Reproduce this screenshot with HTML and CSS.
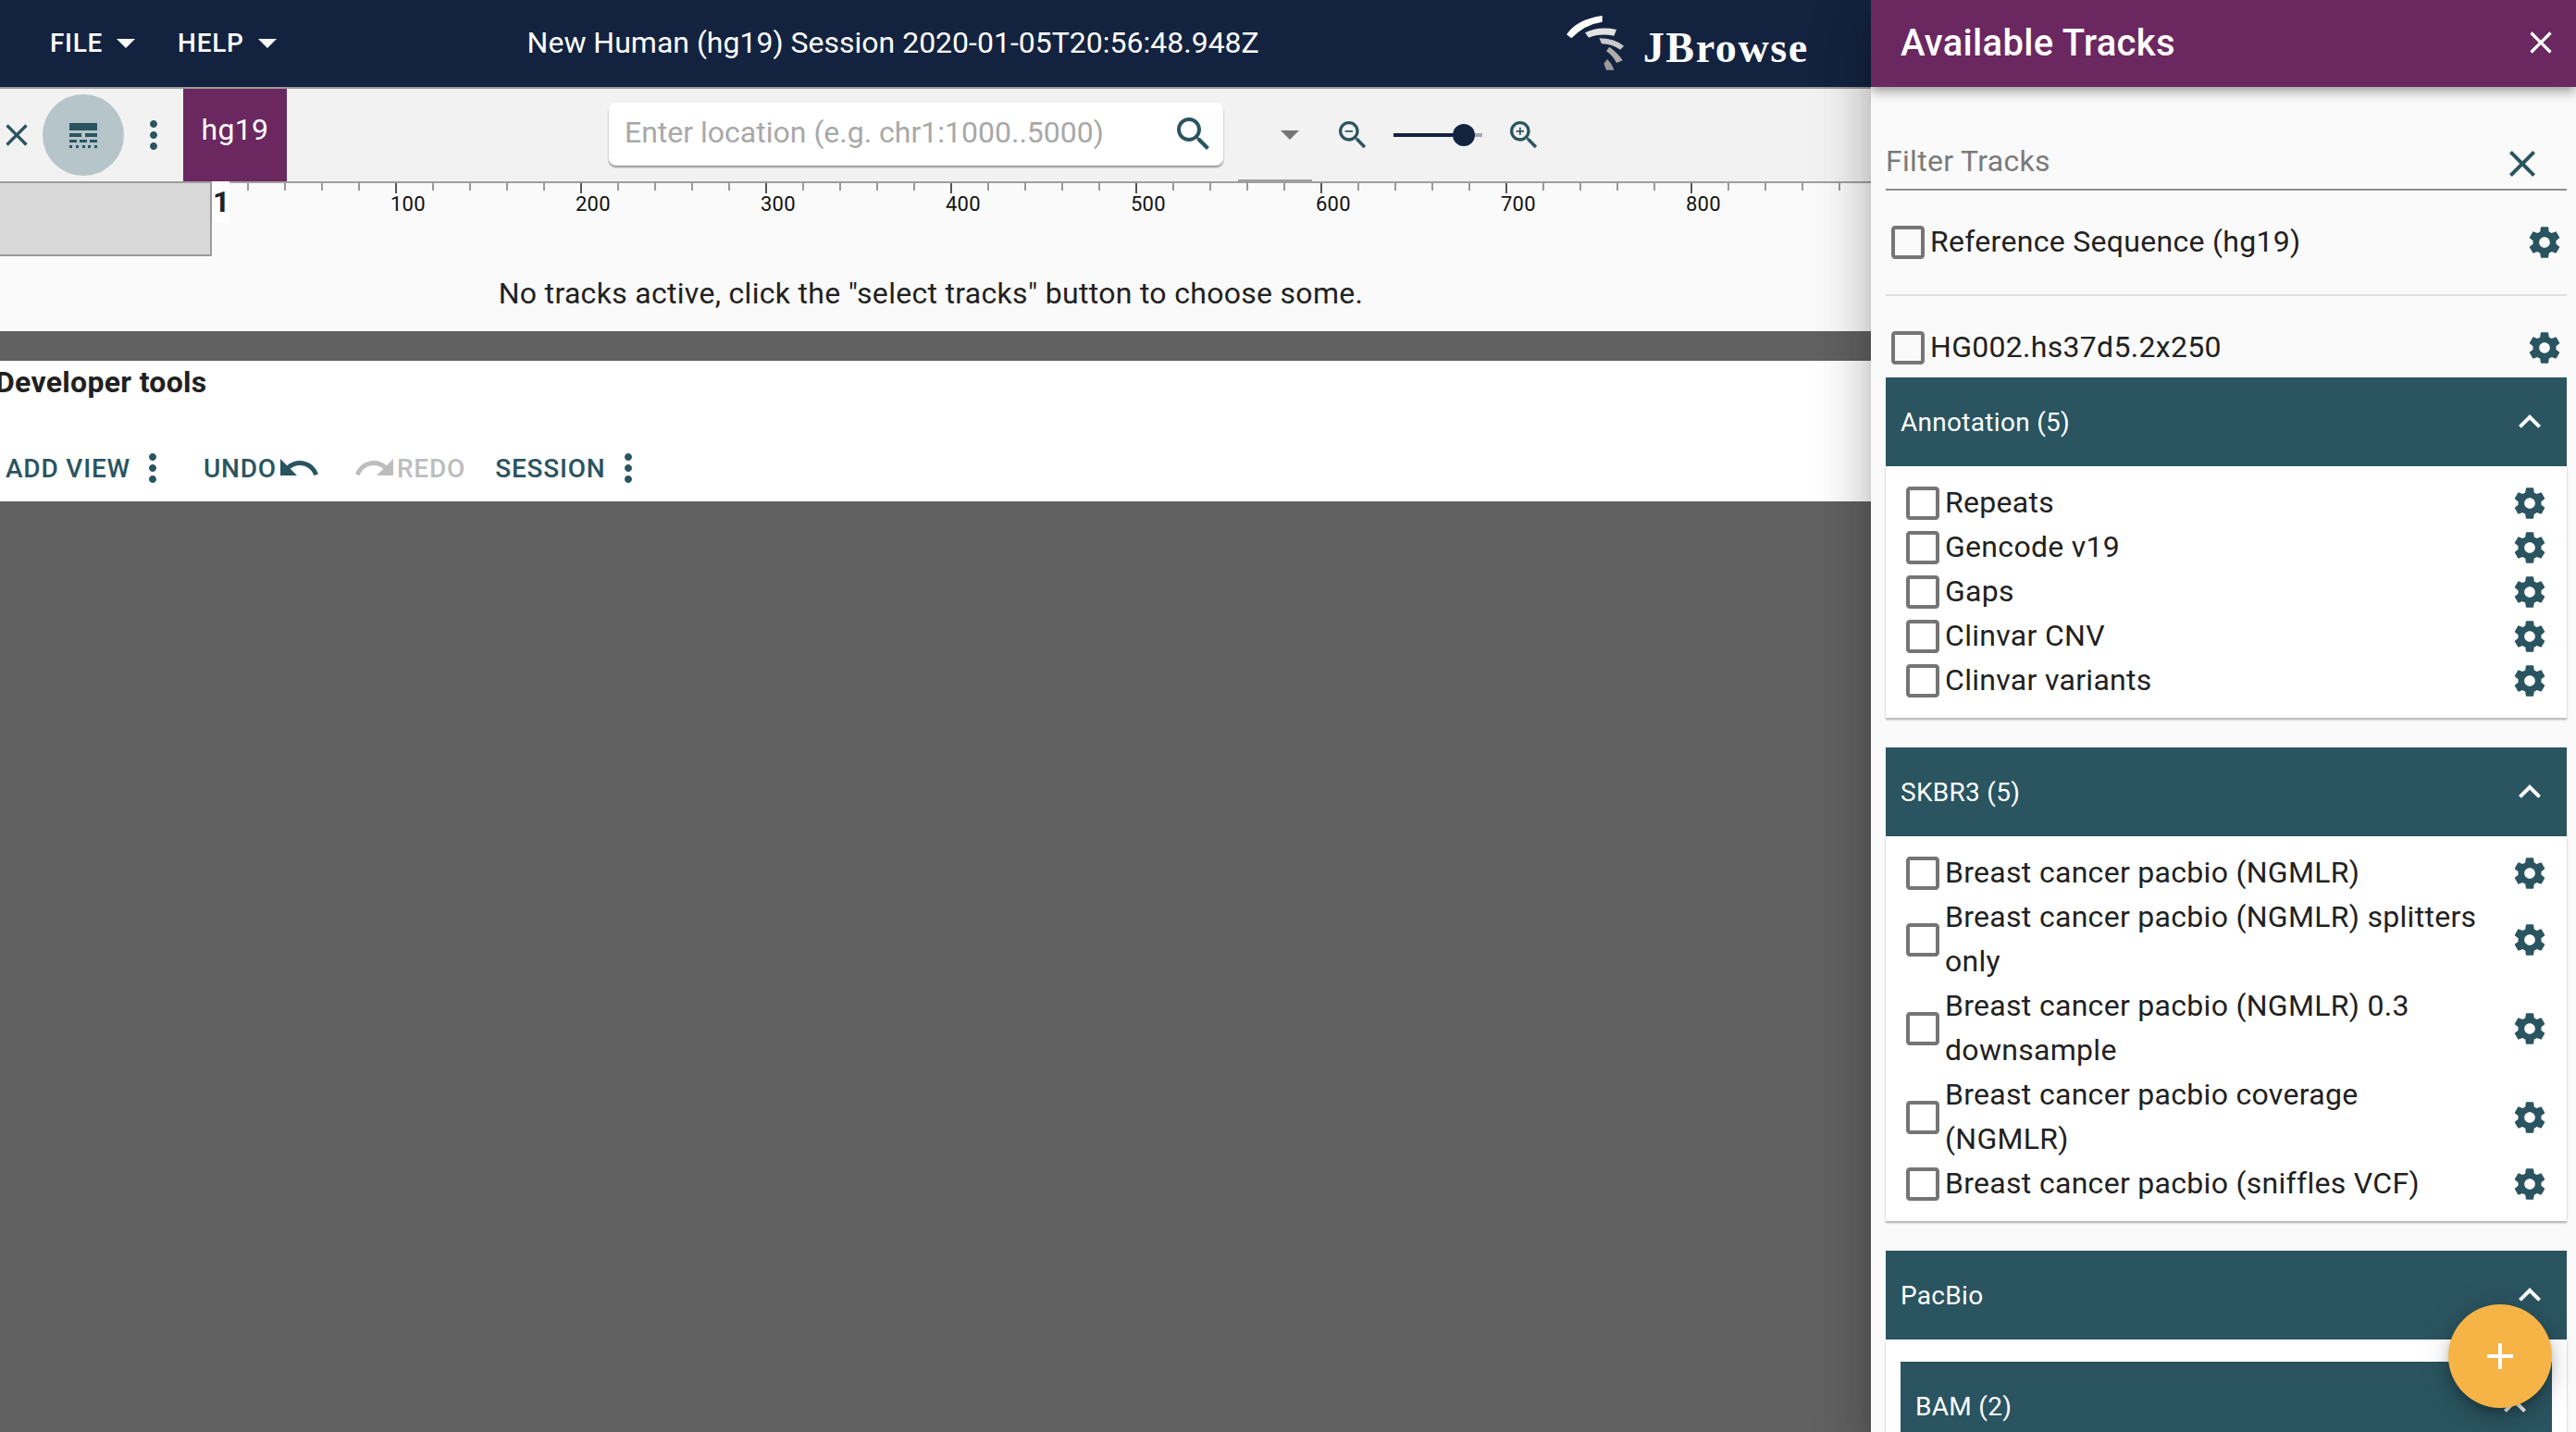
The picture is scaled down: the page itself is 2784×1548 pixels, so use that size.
FILE: index.html
```html
<!DOCTYPE html>
<html>
<head>
    <title>JBrowse</title>
    <meta http-equiv="Content-Type" content="text/html; charset=utf-8" />
    <link rel="stylesheet" href="styles.css">
</head>

<body>
    <svg class="defs" width="0" height="0">
        <defs>
            <symbol id="i-close" viewBox="0 0 24 24"><path d="M19 6.41L17.59 5 12 10.59 6.41 5 5 6.41 10.59 12 5 17.59 6.41 19 12 13.41 17.59 19 19 17.59 13.41 12z"/></symbol>
            <symbol id="i-more" viewBox="0 0 24 24"><path d="M12 8c1.1 0 2-.9 2-2s-.9-2-2-2-2 .9-2 2 .9 2 2 2zm0 2c-1.1 0-2 .9-2 2s.9 2 2 2 2-.9 2-2-.9-2-2-2zm0 6c-1.1 0-2 .9-2 2s.9 2 2 2 2-.9 2-2-.9-2-2-2z"/></symbol>
            <symbol id="i-drop" viewBox="0 0 24 24"><path d="M7 10l5 5 5-5z"/></symbol>
            <symbol id="i-search" viewBox="0 0 24 24"><path d="M15.5 14h-.79l-.28-.27C15.41 12.59 16 11.11 16 9.5 16 5.91 13.09 3 9.5 3S3 5.91 3 9.5 5.91 16 9.5 16c1.61 0 3.09-.59 4.23-1.57l.27.28v.79l5 4.99L20.49 19l-4.99-5zm-6 0C7.01 14 5 11.99 5 9.5S7.01 5 9.5 5 14 7.01 14 9.5 11.99 14 9.5 14z"/></symbol>
            <symbol id="i-gear" viewBox="0 0 24 24"><path d="M19.43 12.98c.04-.32.07-.64.07-.98s-.03-.66-.07-.98l2.11-1.65c.19-.15.24-.42.12-.64l-2-3.46c-.12-.22-.39-.3-.61-.22l-2.49 1c-.52-.4-1.08-.73-1.69-.98l-.38-2.65C14.46 2.18 14.25 2 14 2h-4c-.25 0-.46.18-.49.42l-.38 2.65c-.61.25-1.17.59-1.69.98l-2.49-1c-.23-.09-.49 0-.61.22l-2 3.46c-.13.22-.07.49.12.64l2.11 1.65c-.04.32-.07.65-.07.98s.03.66.07.98l-2.11 1.65c-.19.15-.24.42-.12.64l2 3.46c.12.22.39.3.61.22l2.49-1c.52.4 1.08.73 1.69.98l.38 2.65c.03.24.24.42.49.42h4c.25 0 .46-.18.49-.42l.38-2.65c.61-.25 1.17-.59 1.69-.98l2.49 1c.23.09.49 0 .61-.22l2-3.46c.12-.22.07-.49-.12-.64l-2.11-1.65zM12 15.5c-1.93 0-3.5-1.57-3.5-3.5s1.57-3.5 3.5-3.5 3.5 1.57 3.5 3.5-1.57 3.5-3.5 3.5z"/></symbol>
            <symbol id="i-box" viewBox="0 0 24 24"><path d="M19 5v14H5V5h14m0-2H5c-1.1 0-2 .9-2 2v14c0 1.1.9 2 2 2h14c1.1 0 2-.9 2-2V5c0-1.1-.9-2-2-2z"/></symbol>
            <symbol id="i-less" viewBox="0 0 24 24"><path d="M12 8l-6 6 1.41 1.41L12 10.83l4.59 4.58L18 14z"/></symbol>
        </defs>
    </svg>

    <div class="app">
        <div class="main">
            <header class="topbar">
                <div class="menu-btn">FILE<svg class="ic48"><use href="#i-drop"/></svg></div>
                <div class="menu-btn">HELP<svg class="ic48"><use href="#i-drop"/></svg></div>
                <div class="session-name">New Human (hg19) Session 2020-01-05T20:56:48.948Z</div>
                <div class="logo">
                    <svg class="logo-mark" viewBox="0 0 240 240">
                        <path fill="#ffffff" d="M36 88Q70 38 152 27L152 47Q95 55 52 100Z"/>
                        <path fill="#e2e2e2" d="M96 82Q140 60 198 72L190 92Q145 82 108 98Z"/>
                        <path fill="#c8c8c8" d="M142 100Q190 100 222 125L210 137Q180 118 150 118Z"/>
                        <path fill="#adadad" d="M175 128Q205 150 218 172L198 180Q185 155 165 142Z"/>
                        <path fill="#9a9a9a" d="M168 168Q185 185 190 203L165 203Q160 190 157 182Z"/>
                    </svg>
                    <span class="logo-text">JBrowse</span>
                </div>
            </header>

            <div class="view-bar">
                <svg class="ic40 teal close-view"><use href="#i-close"/></svg>
                <div class="tracks-btn">
                    <svg width="30" height="27" viewBox="0 0 30 27" class="teal">
                        <rect x="0" y="0" width="30" height="8"/>
                        <rect x="0" y="11" width="13" height="4"/><rect x="17" y="11" width="13" height="4"/>
                        <rect x="0" y="18" width="8" height="3"/><rect x="11" y="18" width="8" height="3"/><rect x="22" y="18" width="8" height="3"/>
                        <rect x="0" y="24" width="3" height="3"/><rect x="7" y="24" width="3" height="3"/><rect x="14" y="24" width="3" height="3"/><rect x="20" y="24" width="3" height="3"/><rect x="27" y="24" width="3" height="3"/>
                    </svg>
                </div>
                <svg class="ic48 teal"><use href="#i-more"/></svg>
                <div class="asm-tab">hg19</div>
                <div class="search-box">
                    <span class="search-hint">Enter location (e.g. chr1:1000..5000)</span>
                    <svg class="ic48 teal"><use href="#i-search"/></svg>
                </div>
                <div class="asm-select"><svg class="ic48 grey"><use href="#i-drop"/></svg></div>
                <svg class="ic40 teal zoom-out" viewBox="0 0 24 24"><path d="M15.5 14h-.79l-.28-.27C15.41 12.59 16 11.11 16 9.5 16 5.91 13.09 3 9.5 3S3 5.91 3 9.5 5.91 16 9.5 16c1.61 0 3.09-.59 4.23-1.57l.27.28v.79l5 4.99L20.49 19l-4.99-5zm-6 0C7.01 14 5 11.99 5 9.5S7.01 5 9.5 5 14 7.01 14 9.5 11.99 14 9.5 14zM7 9h5v1H7z"/></svg>
                <div class="slider"><div class="slider-fill"></div><div class="slider-thumb"></div><div class="slider-rest"></div></div>
                <svg class="ic40 teal zoom-in" viewBox="0 0 24 24"><path d="M15.5 14h-.79l-.28-.27C15.41 12.59 16 11.11 16 9.5 16 5.91 13.09 3 9.5 3S3 5.91 3 9.5 5.91 16 9.5 16c1.61 0 3.09-.59 4.23-1.57l.27.28v.79l5 4.99L20.49 19l-4.99-5zm-6 0C7.01 14 5 11.99 5 9.5S7.01 5 9.5 5 14 7.01 14 9.5 11.99 14 9.5 14zm2.5-4h-2v2H9v-2H7V9h2V7h1v2h2v1z"/></svg>
            </div>

            <div class="ruler">
                <svg class="ruler-svg" width="2022" height="80">
                    <defs>
                        <pattern id="minor" x="27" y="0" width="40" height="8" patternUnits="userSpaceOnUse">
                            <rect x="0" y="0" width="2" height="8" fill="#999999"/>
                        </pattern>
                    </defs>
                    <rect x="228" y="0" width="1794" height="8" fill="url(#minor)"/>
                    <g fill="#555555">
                        <rect x="427" width="2" height="11"/><rect x="627" width="2" height="11"/>
                        <rect x="827" width="2" height="11"/><rect x="1027" width="2" height="11"/>
                        <rect x="1227" width="2" height="11"/><rect x="1427" width="2" height="11"/>
                        <rect x="1627" width="2" height="11"/><rect x="1827" width="2" height="11"/>
                    </g>
                    <g class="ruler-num">
                        <text x="422" y="30">100</text><text x="622" y="30">200</text>
                        <text x="822" y="30">300</text><text x="1022" y="30">400</text>
                        <text x="1222" y="30">500</text><text x="1422" y="30">600</text>
                        <text x="1622" y="30">700</text><text x="1822" y="30">800</text>
                    </g>
                </svg>
                <div class="ruler-block"></div>
                <div class="ruler-first">1</div>
            </div>
            <div class="no-tracks">No tracks active, click the "select tracks" button to choose some.</div>

            <div class="gap-dark"></div>

            <div class="dev-panel">
                <div class="dev-title">Developer tools</div>
                <div class="dev-buttons">
                    <div class="dev-btn add-view">ADD VIEW<svg class="ic48 teal"><use href="#i-more"/></svg></div>
                    <div class="dev-btn undo">UNDO<svg class="ic48 teal" viewBox="0 0 24 24"><path d="M12.5 8c-2.65 0-5.05.99-6.9 2.6L2 7v9h9l-3.62-3.62c1.39-1.16 3.16-1.88 5.12-1.88 3.54 0 6.55 2.31 7.6 5.5l2.37-.78C21.08 11.03 17.15 8 12.5 8z"/></svg></div>
                    <div class="dev-btn redo"><svg class="ic48" viewBox="0 0 24 24"><path d="M18.4 10.6C16.55 8.99 14.15 8 11.5 8c-4.65 0-8.58 3.03-9.96 7.22L3.9 16c1.05-3.19 4.05-5.5 7.6-5.5 1.95 0 3.73.72 5.12 1.88L13 16h9V7l-3.6 3.6z"/></svg>REDO</div>
                    <div class="dev-btn session">SESSION<svg class="ic48 teal"><use href="#i-more"/></svg></div>
                </div>
            </div>

            <div class="rest"></div>
        </div>

        <aside class="drawer">
            <div class="drawer-head">
                <span>Available Tracks</span>
                <svg class="ic40 white"><use href="#i-close"/></svg>
            </div>
            <div class="drawer-body">
                <div class="filter">
                    <span>Filter Tracks</span>
                    <svg class="ic48 teal"><use href="#i-close"/></svg>
                </div>

                <div class="track top-track first">
                    <svg class="ic48 box"><use href="#i-box"/></svg>
                    <span class="track-name">Reference Sequence (hg19)</span>
                    <svg class="ic40 teal"><use href="#i-gear"/></svg>
                </div>
                <div class="divider"></div>
                <div class="track top-track">
                    <svg class="ic48 box"><use href="#i-box"/></svg>
                    <span class="track-name">HG002.hs37d5.2x250</span>
                    <svg class="ic40 teal"><use href="#i-gear"/></svg>
                </div>

                <section class="group">
                    <div class="group-head"><span>Annotation (5)</span><svg class="ic48 white"><use href="#i-less"/></svg></div>
                    <div class="group-body">
                        <div class="track"><svg class="ic48 box"><use href="#i-box"/></svg><span class="track-name">Repeats</span><svg class="ic40 teal"><use href="#i-gear"/></svg></div>
                        <div class="track"><svg class="ic48 box"><use href="#i-box"/></svg><span class="track-name">Gencode v19</span><svg class="ic40 teal"><use href="#i-gear"/></svg></div>
                        <div class="track"><svg class="ic48 box"><use href="#i-box"/></svg><span class="track-name">Gaps</span><svg class="ic40 teal"><use href="#i-gear"/></svg></div>
                        <div class="track"><svg class="ic48 box"><use href="#i-box"/></svg><span class="track-name">Clinvar CNV</span><svg class="ic40 teal"><use href="#i-gear"/></svg></div>
                        <div class="track"><svg class="ic48 box"><use href="#i-box"/></svg><span class="track-name">Clinvar variants</span><svg class="ic40 teal"><use href="#i-gear"/></svg></div>
                    </div>
                </section>

                <section class="group">
                    <div class="group-head"><span>SKBR3 (5)</span><svg class="ic48 white"><use href="#i-less"/></svg></div>
                    <div class="group-body">
                        <div class="track"><svg class="ic48 box"><use href="#i-box"/></svg><span class="track-name">Breast cancer pacbio (NGMLR)</span><svg class="ic40 teal"><use href="#i-gear"/></svg></div>
                        <div class="track"><svg class="ic48 box"><use href="#i-box"/></svg><span class="track-name">Breast cancer pacbio (NGMLR) splitters only</span><svg class="ic40 teal"><use href="#i-gear"/></svg></div>
                        <div class="track"><svg class="ic48 box"><use href="#i-box"/></svg><span class="track-name">Breast cancer pacbio (NGMLR) 0.3 downsample</span><svg class="ic40 teal"><use href="#i-gear"/></svg></div>
                        <div class="track"><svg class="ic48 box"><use href="#i-box"/></svg><span class="track-name">Breast cancer pacbio coverage (NGMLR)</span><svg class="ic40 teal"><use href="#i-gear"/></svg></div>
                        <div class="track"><svg class="ic48 box"><use href="#i-box"/></svg><span class="track-name">Breast cancer pacbio (sniffles VCF)</span><svg class="ic40 teal"><use href="#i-gear"/></svg></div>
                    </div>
                </section>

                <section class="group">
                    <div class="group-head"><span>PacBio</span><svg class="ic48 white"><use href="#i-less"/></svg></div>
                    <div class="group-body nested">
                        <div class="group-head"><span>BAM (2)</span><svg class="ic48 white"><use href="#i-less"/></svg></div>
                    </div>
                </section>
            </div>

            <div class="fab">
                <svg width="28" height="28" viewBox="0 0 28 28"><rect x="12" y="0" width="4" height="28" fill="#fff"/><rect x="0" y="12" width="28" height="4" fill="#fff"/></svg>
            </div>
        </aside>
    </div>
</body>

</html>
```

FILE: styles.css
```css
html, body {
    margin: 0;
    height: 100%;
    overflow: hidden;
}

body {
    font-family: Roboto, "Liberation Sans", sans-serif;
    font-size: 32px;
    letter-spacing: 0.3px;
    color: #212121;
}

svg {
    fill: currentColor;
    flex: none;
    display: block;
}

.defs {
    position: absolute;
}

.ic48 { width: 48px; height: 48px; }
.ic40 { width: 40px; height: 40px; }
.teal { color: #2a5460; fill: #2a5460; }
.white { color: #ffffff; }
.grey { color: #757575; }
.box { color: #757575; }

.app {
    display: flex;
    width: 2784px;
    height: 1548px;
    overflow: hidden;
}

.main {
    width: 2022px;
    display: flex;
    flex-direction: column;
    background-color: #616161;
}

/* top bar */
.topbar {
    height: 92px;
    padding: 0 0 2px 38px;
    border-bottom: 2px solid #9a9a9a;
    background-color: #13233f;
    color: #ffffff;
    display: flex;
    align-items: center;
}

.menu-btn {
    display: flex;
    align-items: center;
    padding: 0 16px;
    font-size: 28px;
    font-weight: 500;
    letter-spacing: 0.7px;
}

.menu-btn svg {
    margin-left: 1px;
}

.session-name {
    margin-left: 241px;
    white-space: nowrap;
    letter-spacing: 0;
}

.logo {
    display: flex;
    align-items: center;
    margin-left: 320px;
    padding-top: 2px;
}

.logo-mark {
    width: 80px;
    height: 80px;
    margin-top: 2px;
}

.logo-text {
    font-family: "Liberation Serif", serif;
    font-size: 46px;
    font-weight: 700;
    letter-spacing: 1.6px;
    margin-left: 15px;
    margin-top: 8px;
}

/* view toolbar */
.view-bar {
    height: 100px;
    background-color: #f2f2f2;
    display: flex;
    align-items: center;
}

.close-view {
    margin-left: -2px;
}

.tracks-btn {
    width: 88px;
    height: 88px;
    margin-left: 8px;
    border-radius: 50%;
    background-color: #b5c5c9;
    display: flex;
    align-items: center;
    justify-content: center;
}

.view-bar > .ic48.teal {
    margin-left: 8px;
}

.asm-tab {
    align-self: stretch;
    width: 112px;
    margin-left: 8px;
    background-color: #6b2860;
    color: #ffffff;
    text-align: center;
    line-height: 88px;
}

.search-box {
    width: 664px;
    height: 68px;
    margin-left: 348px;
    margin-top: -2px;
    border-radius: 8px;
    background-color: #ffffff;
    box-shadow: 0 2px 2px rgba(0, 0, 0, 0.4);
    display: flex;
    align-items: center;
    justify-content: space-between;
    padding: 0 8px 0 17px;
    box-sizing: border-box;
}

.search-hint {
    color: #a8a8a8;
    margin-top: -4px;
    letter-spacing: 0;
}

.asm-select {
    align-self: stretch;
    width: 80px;
    box-sizing: border-box;
    margin-left: 16px;
    border-bottom: 2px solid #a0a0a0;
    display: flex;
    justify-content: flex-end;
    align-items: center;
}

.zoom-out {
    margin-left: 24px;
}

.slider {
    width: 96px;
    margin-left: 24px;
    display: flex;
    align-items: center;
}

.slider-fill {
    width: 64px;
    height: 4px;
    background-color: #13233f;
}

.slider-thumb {
    width: 24px;
    height: 24px;
    border-radius: 50%;
    background-color: #13233f;
}

.slider-rest {
    width: 8px;
    height: 4px;
    background-color: #a1a7b2;
}

.zoom-in {
    margin-left: 25px;
}

/* ruler and empty track area */
.ruler {
    position: relative;
    height: 80px;
    border-top: 2px solid #9e9e9e;
    background-color: #fafafa;
}

.ruler-num {
    font-size: 22px;
    letter-spacing: 0.2px;
    fill: #111111;
}

.ruler-block {
    position: absolute;
    left: 0;
    top: 0;
    width: 227px;
    height: 77px;
    background-color: #d8d8d8;
    border-right: 2px solid #9a9a9a;
    border-bottom: 2px solid #9a9a9a;
}

.ruler-first {
    position: absolute;
    left: 229px;
    top: -2px;
    width: 19px;
    height: 44px;
    padding-left: 1px;
    box-sizing: border-box;
    background-color: #ffffff;
    font-weight: 700;
    line-height: 44px;
}

.no-tracks {
    height: 80px;
    line-height: 78px;
    padding-right: 10px;
    background-color: #fafafa;
    text-align: center;
}

.gap-dark {
    height: 32px;
}

/* developer tools panel */
.dev-panel {
    height: 152px;
    background-color: #ffffff;
}

.dev-title {
    margin-left: -5px;
    font-weight: 700;
    line-height: 46px;
}

.dev-buttons {
    display: flex;
    align-items: center;
    margin-top: 46px;
    padding-left: 6px;
    font-size: 28px;
    font-weight: 500;
    letter-spacing: 0.8px;
    color: #2a5460;
}

.dev-btn {
    display: flex;
    align-items: center;
}

.undo {
    margin-left: 31px;
}

.redo {
    margin-left: 34px;
    color: #bdbdbd;
}

.session {
    margin-left: 32px;
}

.rest {
    flex: 1;
}

/* track selector drawer */
.drawer {
    position: relative;
    width: 762px;
    height: 1548px;
    overflow: hidden;
    background-color: #fafafa;
    box-shadow: 0 16px 20px -10px rgba(0, 0, 0, 0.2), 0 32px 48px 4px rgba(0, 0, 0, 0.14), 0 12px 60px 10px rgba(0, 0, 0, 0.12);
}

.drawer-head {
    position: relative;
    height: 92px;
    padding: 0 18px 2px 32px;
    background-color: #6b2860;
    color: #ffffff;
    display: flex;
    align-items: center;
    justify-content: space-between;
    font-size: 40px;
    font-weight: 500;
    letter-spacing: 0.3px;
    box-shadow: 0 4px 8px -2px rgba(0, 0, 0, 0.2), 0 8px 10px 0 rgba(0, 0, 0, 0.14), 0 2px 20px 0 rgba(0, 0, 0, 0.12);
}

.drawer-body {
    padding: 0 10px 0 16px;
}

.filter {
    margin-top: 56px;
    height: 54px;
    padding-right: 24px;
    border-bottom: 2px solid #8d8d8d;
    display: flex;
    align-items: center;
    justify-content: space-between;
    color: #7a7a7a;
}

.filter span {
    margin-top: -6px;
}

.track {
    display: flex;
    align-items: center;
    min-height: 48px;
    line-height: 48px;
}

.track-name {
    flex: 1;
    padding-right: 32px;
    margin: -1px 0 1px;
}

.top-track {
    padding-right: 4px;
}

.top-track.first {
    margin-top: 32px;
}

.divider {
    height: 2px;
    margin: 32px 0;
    background-color: #e0e0e0;
}

.group {
    margin-bottom: 32px;
}

.top-track + .group {
    margin-top: 8px;
}

.group-head {
    height: 96px;
    padding: 0 16px;
    background-color: #2a5460;
    color: #ffffff;
    display: flex;
    align-items: center;
    justify-content: space-between;
    font-size: 28px;
}

.group-body {
    padding: 16px 20px 16px 16px;
    background-color: #ffffff;
    box-shadow: 0 2px 2px rgba(0, 0, 0, 0.3);
}

.group-body.nested {
    padding: 24px 16px 16px;
}

.fab {
    position: absolute;
    left: 624px;
    top: 1410px;
    width: 112px;
    height: 112px;
    border-radius: 50%;
    background-color: #f5b445;
    display: flex;
    align-items: center;
    justify-content: center;
    box-shadow: 0 6px 10px -2px rgba(0, 0, 0, 0.2), 0 12px 20px 0 rgba(0, 0, 0, 0.14), 0 2px 36px 0 rgba(0, 0, 0, 0.12);
}
```
